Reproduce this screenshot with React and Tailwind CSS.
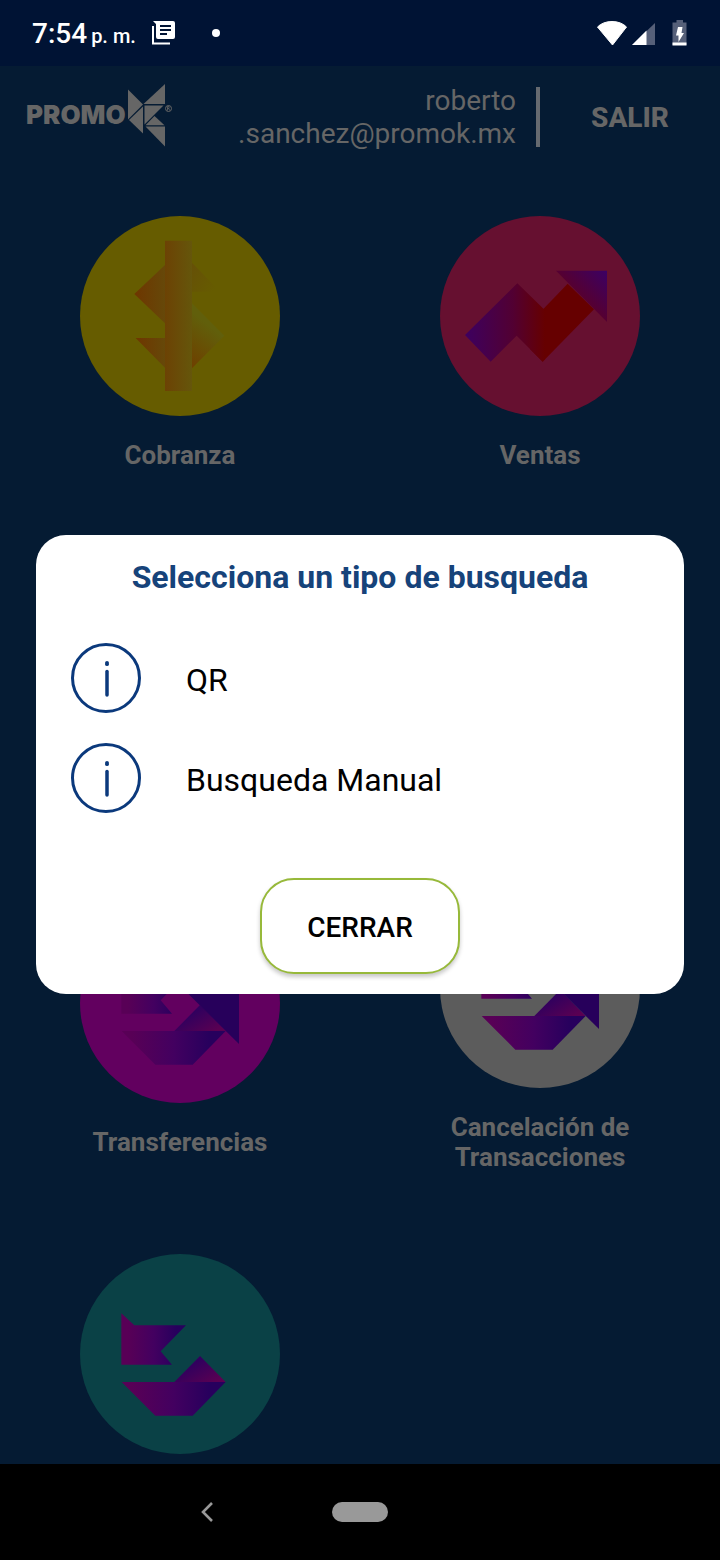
import React from "react";

function StatusBar() {
  return (
    <header className="flex h-[66px] shrink-0 items-center justify-between bg-[#001334] px-8 text-white">
      <div className="flex items-center">
        <p className="flex items-baseline gap-1 pt-1 font-medium">
          <span className="text-[28px] leading-8">7:54</span>
          <span className="text-[20px] leading-8">p. m.</span>
        </p>
        <svg className="ml-4 h-6 w-6" viewBox="0 0 24 24" aria-hidden="true">
          <path d="M1 5v17.500h17" fill="none" stroke="#fff" strokeWidth="2" />
          <path d="M1 0h20a2 2 0 0 1 2 2v14a2 2 0 0 1-2 2H6a2 2 0 0 1-2-2V3z" fill="#fff" />
          <path d="M8 5h11M8 9h11M8 13h7" stroke="#001334" strokeWidth="1.800" />
        </svg>
        <span className="ml-9 h-2 w-2 rounded-full bg-white" />
      </div>
      <div className="flex items-center">
        <svg className="h-7 w-8" viewBox="0 0 32 28" aria-hidden="true">
          <path d="M1.500 8Q7 2.500 16 2.500T30.500 8L16.500 26z" fill="#fff" stroke="#fff" strokeWidth="1" strokeLinejoin="round" />
        </svg>
        <svg className="ml-1 h-7 w-6" viewBox="0 0 24 28" aria-hidden="true">
          <path d="M23 4v22H0z" fill="#566079" />
          <path d="M14.500 11.500V26H0z" fill="#fff" />
        </svg>
        <svg className="ml-4 h-7 w-4" viewBox="0 0 16 28" aria-hidden="true">
          <path d="M4.500 1h6.500v2.500h3.500v22.500H0.500V3.500h4z" fill="#566079" />
          <path d="M6 8h4.500l-1 6H12L6.500 23V16.500H4z" fill="#fff" />
          <path d="M.5 23.500h14v3H.5z" fill="#fff" />
        </svg>
      </div>
    </header>
  );
}

function Logo() {
  return (
    <div className="flex h-16 items-center gap-0.5 text-[#666666]">
      <span className="font-[Inter,sans-serif] text-[26px] leading-8 font-black">PROMO</span>
      <svg className="h-16 w-[46px]" viewBox="128 83 46 64" aria-hidden="true">
        <g fill="currentColor">
          <path d="M128 89.500 143 104.500 128 119.500z" />
          <path d="M165 84V104H143.500z" />
          <path d="M143 106.500V133.500L129 120z" />
          <path d="M144.500 105.500H163.500L144.500 124.500z" />
          <path d="M154.500 116 164.500 125.300H145.500z" />
          <path d="M145.500 126.500H165V146.500z" />
        </g>
        <circle cx="168.500" cy="108.500" r="3" fill="none" stroke="currentColor" strokeWidth="1" />
        <path d="M167.500 110.500v-4h1.500v2h-1.500M168.700 108.500l1 2" fill="none" stroke="currentColor" strokeWidth=".8" />
      </svg>
    </div>
  );
}

function MoneyIcon() {
  return (
    <>
      <defs>
        <linearGradient id="m1"><stop stopColor="#6e3600" /><stop offset="1" stopColor="#664809" /></linearGradient>
        <linearGradient id="m2"><stop stopColor="#6c4204" /><stop offset="1" stopColor="#65560b" /></linearGradient>
        <linearGradient id="m3" x1="0" y1="0" x2="1" y2=".6"><stop stopColor="#665007" /><stop offset="1" stopColor="#665c00" /></linearGradient>
        <linearGradient id="m4" x1=".3" y1=".25" x2="0" y2="1"><stop stopColor="#615f0b" /><stop offset=".5" stopColor="#684f04" /><stop offset="1" stopColor="#6e3f00" /></linearGradient>
      </defs>
      <path d="M285 177V352L193 264z" fill="url(#m1)" />
      <path d="M197 396H285V485z" fill="url(#m1)" />
      <path d="M366 170 450 257H366z" fill="url(#m3)" />
      <path d="M366 292 463 389 366 487z" fill="url(#m4)" />
      <path d="M285 104H366V555H285z" fill="url(#m2)" />
    </>
  );
}

function TrendIcon() {
  return (
    <>
      <defs>
        <linearGradient id="t1"><stop stopColor="#3d0060" /><stop offset=".6" stopColor="#520032" /><stop offset="1" stopColor="#660000" /></linearGradient>
        <linearGradient id="t2" x1="1" y1="0" x2=".45" y2=".55"><stop stopColor="#3b0065" /><stop offset="1" stopColor="#58002c" /></linearGradient>
      </defs>
      <path d="M340 309 413 233 492 310 338 467 300 429z" fill="#660000" />
      <path d="M105 387 262 232 345 313V460L338 467 260 389 182 467z" fill="url(#t1)" />
      <path d="M378 194H531V348z" fill="url(#t2)" />
    </>
  );
}

function TransferIcon({ id, arrow = false }) {
  const main = id + "-main";
  const fold = id + "-fold";
  return (
    <>
      <defs>
        <linearGradient id={main}><stop offset=".1" stopColor="#580056" /><stop offset=".5" stopColor="#430060" /><stop offset=".85" stopColor="#27005d" /></linearGradient>
        <linearGradient id={fold} x1=".2" y1=".5" x2=".8" y2="1"><stop stopColor="#31005e" /><stop offset="1" stopColor="#5a0052" /></linearGradient>
      </defs>
      <path d="M154 208 193 244H348L272 322 306 362H154z" fill={"url(#" + main + ")"} />
      <path d="M390 336 467 414H313z" fill={"url(#" + fold + ")"} />
      <path d="M155 414H467L368 515H256z" fill={"url(#" + main + ")"} />
      {arrow && <path d="M350 298H507V453z" fill="#27005b" />}
    </>
  );
}

function Tile({ label, name, circle, children }) {
  return (
    <li className="flex items-center justify-center py-[41px]">
      <a href="#" aria-label={name} className="flex flex-col items-center gap-6">
        <span className={"block h-[200px] w-[200px] rounded-full " + circle}>
          <svg className="h-full w-full" viewBox="30 30 600 600" aria-hidden="true">
            {children}
          </svg>
        </span>
        {label && (
          <span className="max-w-[220px] text-center text-[26px] leading-[30px] font-bold">{label}</span>
        )}
      </a>
    </li>
  );
}

function Option({ label }) {
  return (
    <button type="button" className="flex items-center gap-[45px] text-left">
      <svg className="h-[70px] w-[70px]" viewBox="0 0 70 70" aria-hidden="true">
        <circle cx="35" cy="35" r="33.500" fill="none" stroke="#0b397c" strokeWidth="3" />
        <path d="M36 28.500V52" stroke="#0b397c" strokeWidth="3.500" strokeLinecap="round" />
        <path d="M36 19.800v1.400" stroke="#0b397c" strokeWidth="3.800" strokeLinecap="round" />
      </svg>
      <span className="pt-1 text-[32px] leading-10 text-black">{label}</span>
    </button>
  );
}

export default function App() {
  return (
    <div className="flex h-screen flex-col overflow-hidden bg-[#051b33] font-[Roboto,sans-serif]">
      <StatusBar />

      <div className="relative min-h-0 flex-1 overflow-hidden">
        <div className="text-[#666666]">
          <div className="flex h-[109px] items-start justify-between pl-[26px]">
            <div className="pt-[17px]">
              <Logo />
            </div>
            <div className="flex items-center pt-[18px]">
              <p className="text-right text-[28px] leading-[33px]">
                roberto
                <br />
                .sanchez@promok.mx
              </p>
              <span className="ml-5 h-[60px] w-1 bg-[#666a70]" />
              <button type="button" className="w-[180px] text-[28px] leading-[33px] font-extrabold">
                SALIR
              </button>
            </div>
          </div>

          <ul className="grid grid-cols-2">
            <Tile label="Cobranza" circle="bg-[#665c00]">
              <MoneyIcon />
            </Tile>
            <Tile label="Ventas" circle="bg-[#661030]">
              <TrendIcon />
            </Tile>
            <li className="col-span-2 h-[336px]" aria-hidden="true" />
            <Tile label="Transferencias" circle="bg-[#62005f]">
              <TransferIcon id="transfer" arrow />
            </Tile>
            <Tile label="Cancelación de Transacciones" circle="bg-[#5c5c5c]">
              <TransferIcon id="cancel" arrow />
            </Tile>
            <Tile name="Devoluciones" circle="bg-[#0a4146]">
              <TransferIcon id="return" />
            </Tile>
          </ul>
        </div>

        <div className="absolute inset-0 flex items-center px-9 pb-0.5">
          <section
            role="dialog"
            aria-labelledby="dialog-title"
            className="flex w-full flex-col rounded-[30px] bg-white px-[35px] pt-[22px] pb-5"
          >
            <h1 id="dialog-title" className="text-center text-[32px] leading-10 font-bold text-[#16437a]">
              Selecciona un tipo de busqueda
            </h1>
            <div className="mt-[46px] flex flex-col gap-[30px]">
              <Option label="QR" />
              <Option label="Busqueda Manual" />
            </div>
            <button
              type="button"
              className="mt-[65px] h-24 w-[200px] self-center rounded-[34px] border-2 border-[#97b93a] bg-white pt-1 text-[28px] leading-8 font-medium text-black shadow-[0_3px_4px_rgba(0,0,0,0.22)]"
            >
              CERRAR
            </button>
          </section>
        </div>
      </div>

      <nav className="grid h-24 shrink-0 grid-cols-[1fr_56px_1fr] items-center bg-black">
        <button type="button" aria-label="Atrás" className="mr-[116px] justify-self-end">
          <svg className="h-6 w-4" viewBox="0 0 16 24" aria-hidden="true">
            <path d="M12 3 3 12l9 9" fill="none" stroke="#999" strokeWidth="2.600" />
          </svg>
        </button>
        <button type="button" aria-label="Inicio" className="h-5 rounded-full bg-[#999999]" />
      </nav>
    </div>
  );
}
